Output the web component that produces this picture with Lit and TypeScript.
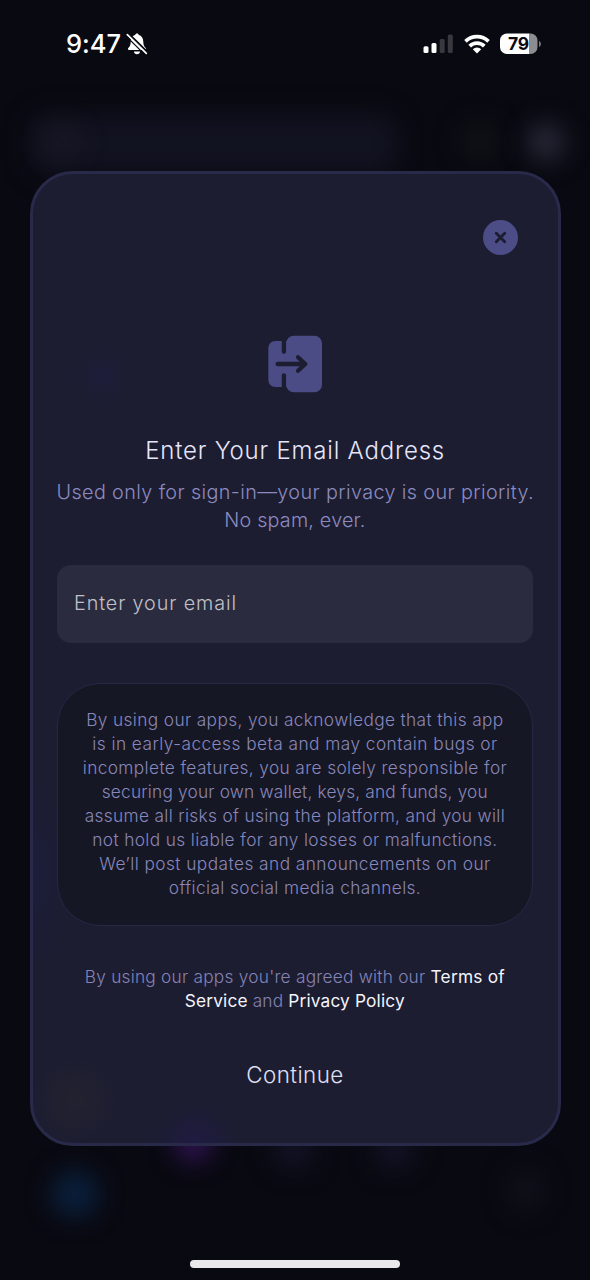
import { LitElement, html, css, svg } from "lit";
import { customElement, property } from "lit/decorators.js";

/** One line of text, tracked so that it spans the given width. */
@customElement("fit-line")
class FitLine extends LitElement {
  @property({ type: Number }) width = 0;

  static styles = css`
    :host { display: block; white-space: nowrap; }
    .run { display: inline-block; }
  `;

  firstUpdated() {
    const run = this.renderRoot.querySelector(".run") as HTMLElement;
    const count = (this.textContent ?? "").length;
    if (!this.width || count < 2) return;
    const spacing = (this.width - run.getBoundingClientRect().width) / (count - 1);
    run.style.letterSpacing = `${spacing}px`;
    run.style.marginRight = `${-spacing}px`;
  }

  render() {
    return html`<span class="run"><slot></slot></span>`;
  }
}

@customElement("status-bar")
class StatusBar extends LitElement {
  static styles = css`
    :host { display: flex; justify-content: space-between; align-items: center; height: 88px; padding: 0 48px 0 66px; box-sizing: border-box; color: #fff; }
    .left, .right { display: flex; align-items: center; }
    .time { font-size: 25.5px; font-weight: 500; line-height: 30px; width: 60px; }
    .right { gap: 10px; }
    svg { display: block; }
    .num { font-family: Inter, sans-serif; font-weight: 700; font-size: 17.5px; letter-spacing: -0.3px; }
  `;

  render() {
    return html`
      <div class="left">
        <div class="time"><fit-line width="55">9:47</fit-line></div>
        <svg width="22" height="24" viewBox="0 0 22 24">
          <path fill="#fff" d="M11 1.6c.9 0 1.7.6 1.9 1.5 2.7.8 4.2 3 4.3 6 .1 3.6.7 5.2 2.500 7 .8.9.4 2-.8 2H3.100c-1.200 0-1.600-1.100-.8-2 1.800-1.800 2.400-3.400 2.500-7 .1-3 1.600-5.200 4.300-6 .2-.9 1-1.500 1.900-1.500zM7.900 19.500h6.200c-.2 1.700-1.500 2.800-3.100 2.800s-2.900-1.100-3.100-2.800z"/>
          <path d="M2.600 1.800 21.800 20.600" stroke="#0a0a12" stroke-width="2.200"/>
          <path d="M1.300 2.700 20.300 21.300" stroke="#fff" stroke-width="1.700" stroke-linecap="round"/>
          <path d="M.6 4.600 18.800 22.600" stroke="#0a0a12" stroke-width="1.300"/>
        </svg>
      </div>
      <div class="right">
        <svg width="31" height="20" viewBox="0 0 31 20">
          <rect x="0.500" y="12.300" width="5" height="6.700" rx="1.500" fill="#fff"/>
          <rect x="8.500" y="9" width="5" height="10" rx="1.500" fill="#fff"/>
          <rect x="16.700" y="5" width="5" height="14" rx="1.500" fill="#39383e"/>
          <rect x="24.800" y="0.500" width="5" height="18.500" rx="1.500" fill="#39383e"/>
        </svg>
        <svg width="26" height="20" viewBox="0 0 26 20">
          <g fill="none" stroke="#fff" stroke-width="3.700">
            <path d="M1.500 7.400a16.300 16.300 0 0 1 23 0"/>
            <path d="M5.700 12.100a10.300 10.300 0 0 1 14.600 0"/>
          </g>
          <path d="M13 19.500 8.800 15.300a5.900 5.900 0 0 1 8.400 0z" fill="#fff"/>
        </svg>
        <svg width="42" height="22" viewBox="0 0 42 22">
          <defs><clipPath id="b"><rect x="0" y="0.500" width="37.500" height="20.500" rx="7"/></clipPath></defs>
          <g clip-path="url(#b)">
            <rect width="29.500" height="22" fill="#fff"/>
            <rect x="29.500" width="9" height="22" fill="#8d8c92"/>
          </g>
          <path d="M39 8c2.600.8 2.600 5.200 0 6z" fill="#77767c"/>
          <text class="num" x="18.500" y="17" text-anchor="middle" fill="#0a0a12">79</text>
        </svg>
      </div>
    `;
  }
}

const exitIcon = svg`
  <rect x="18.300" y="21" width="26" height="46" rx="7"/>
  <rect x="36.200" y="15.700" width="35.800" height="56.600" rx="7.500"/>
  <g class="cut">
    <path d="M33.900 17v14.700M33.900 55.500v16"/>
    <path d="M27.600 44h27.500M48 37.200l7.300 6.800-7.300 6.800" stroke-linejoin="round"/>
  </g>`;

const disclaimer: [string, number][] = [
  ["By using our apps, you acknowledge that this app", 417],
  ["is in early-access beta and may contain bugs or", 405],
  ["incomplete features, you are solely responsible for", 424],
  ["securing your own wallet, keys, and funds, you", 386],
  ["assume all risks of using the platform, and you will", 420],
  ["not hold us liable for any losses or malfunctions.", 405],
  ["We’ll post updates and announcements on our", 391],
  ["official social media channels.", 252],
];

@customElement("app-root")
class AppRoot extends LitElement {
  static styles = css`
    :host {
      display: flex; flex-direction: column; position: relative; overflow: hidden;
      width: 590px; height: 1280px; background: #090911;
      font-family: Inter, sans-serif; font-weight: 300;
    }
    .backdrop { position: absolute; inset: 0; }
    .blob { position: absolute; filter: blur(12px); border-radius: 30px; }
    .search { left: 30px; top: 115px; width: 366px; height: 58px; background: #121321; border-radius: 14px; }
    .lens { left: 45px; top: 125px; width: 34px; height: 34px; background: #171824; }
    .round { left: 460px; top: 122px; width: 38px; height: 38px; background: #111117; }
    .avatar { left: 527px; top: 123px; width: 38px; height: 38px; background: #282838; }
    .violet { left: 174px; top: 1122px; width: 38px; height: 40px; background: #2f1452; }
    .blue { left: 51px; top: 1170px; width: 48px; height: 48px; background: #0a1f3b; }
    .dim1 { left: 273px; top: 1130px; width: 42px; height: 40px; background: #131225; }
    .dim2 { left: 373px; top: 1130px; width: 42px; height: 40px; background: #131225; }
    .dim3 { left: 508px; top: 1168px; width: 36px; height: 44px; background: #101019; }
    status-bar { position: relative; }
    .card {
      position: relative; box-sizing: border-box; width: 531px; height: 975px;
      margin: 83px 0 0 29.5px; padding: 46px 24.5px 0 24px; border: 3px solid #292a4a; border-radius: 43px;
      display: flex; flex-direction: column; text-align: center;
      background:
        radial-gradient(circle at 42px 926px, #22222f 0, rgba(34, 34, 47, 0) 44px),
        radial-gradient(circle at 70px 202px, #1e1d3a 0, rgba(30, 29, 58, 0) 28px),
        radial-gradient(circle at 162px 970px, #1f1b42 0, rgba(31, 27, 66, 0) 42px),
        radial-gradient(ellipse 36px 90px at 4px 700px, #1c1d39 0, rgba(28, 29, 57, 0) 100%),
        #1c1d31;
    }
    svg { display: block; }
    .close { align-self: flex-end; margin-right: 15.5px; }
    .icon { align-self: center; margin-top: 65px; fill: #4b4b85; }
    .cut { fill: none; stroke: #1c1d31; stroke-width: 4.3px; stroke-linecap: round; }
    .title { margin-top: 25px; font-size: 24px; line-height: 32px; color: #e6e6fa; }
    .sub { margin-top: 10.6px; font-size: 19.8px; line-height: 28.3px; color: #8c8bc0; }
    .field {
      margin-top: 30.4px; height: 78px; box-sizing: border-box; padding: 0 17.5px 2px; border-radius: 14px;
      display: flex; align-items: center; background: #2b2b40; color: #c0c0c8; font-size: 19.8px;
    }
    .note {
      margin-top: 40px; height: 243px; box-sizing: border-box; padding-top: 24px; border: 1.6px solid #262744;
      border-radius: 43px; background: #161725; color: #8987bb; font-size: 17.3px; line-height: 24px;
    }
    .terms { margin-top: 39.5px; font-size: 17.3px; line-height: 24px; color: #8583b7; }
    .link { color: #f4f4fb; font-weight: 400; }
    .continue { margin-top: 46.5px; font-size: 22.4px; line-height: 30px; color: #e0e0f4; }
    .home { position: relative; width: 210px; height: 8px; margin: 114px auto 0; border-radius: 4px; background: #e9e9e9; }
  `;

  render() {
    return html`
      <div class="backdrop">
        <div class="blob search"></div><div class="blob lens"></div>
        <div class="blob round"></div><div class="blob avatar"></div>
        <div class="blob violet"></div><div class="blob blue"></div>
        <div class="blob dim1"></div><div class="blob dim2"></div><div class="blob dim3"></div>
      </div>
      <status-bar></status-bar>
      <section class="card">
        <svg class="close" width="35" height="35" viewBox="0 0 35 35">
          <circle cx="17.500" cy="17.500" r="17.500" fill="#4c4c87"/>
          <path d="M13.300 13.300l8.400 8.400m0-8.400l-8.400 8.400" stroke="#1c1d31" stroke-width="2.900" stroke-linecap="round"/>
        </svg>
        <svg class="icon" width="90" height="90" viewBox="0 0 90 90">${exitIcon}</svg>
        <div class="title"><fit-line width="299">Enter Your Email Address</fit-line></div>
        <div class="sub">
          <fit-line width="477">Used only for sign-in—your privacy is our priority.</fit-line>
          <fit-line width="141">No spam, ever.</fit-line>
        </div>
        <div class="field"><fit-line width="162">Enter your email</fit-line></div>
        <div class="note">${disclaimer.map(([text, width]) => html`<fit-line width=${width}>${text}</fit-line>`)}</div>
        <div class="terms">
          <fit-line width="420">By using our apps you're agreed with our <span class="link">Terms of</span></fit-line>
          <fit-line width="220"><span class="link">Service</span> and <span class="link">Privacy Policy</span></fit-line>
        </div>
        <div class="continue"><fit-line width="97">Continue</fit-line></div>
      </section>
      <div class="home"></div>
    `;
  }
}
